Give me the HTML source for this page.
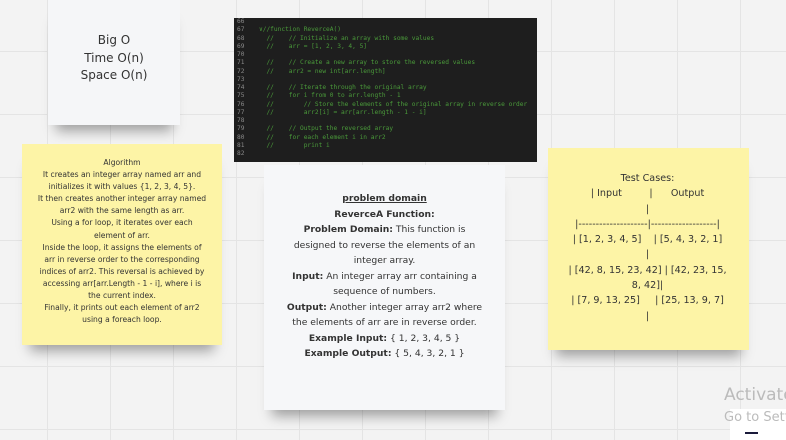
<!DOCTYPE html>
<html><head><meta charset="utf-8"><style>
html,body{margin:0;padding:0}
body{width:786px;height:440px;overflow:hidden;position:relative;background-color:#f3f3f3;
background-image:linear-gradient(#e4e4e4 1px,transparent 1px),linear-gradient(90deg,#e4e4e4 1px,transparent 1px);
background-size:63px 63px;background-position:47px 51px;font-family:"DejaVu Sans","Liberation Sans",sans-serif;color:#333}
.card{position:absolute;box-sizing:border-box;text-align:center}
.sh{box-shadow:0 14px 12px -8px rgba(0,0,0,.35)}
#bigo{left:48px;top:0;width:132px;height:125px;background:#f5f6f8;font-size:12px;line-height:17.5px;padding-top:32px;color:#333}
#code{position:absolute;left:234px;top:18px;width:303px;height:144px;background:#1e1e1e;font-family:"DejaVu Sans Mono","Liberation Mono",monospace;font-size:6.2px;line-height:8.27px;color:#4a9a3a;white-space:pre;overflow:hidden}
#code .n{display:inline-block;width:22px;color:#8a8a8a;padding-left:3px}
#alg{left:22px;top:144px;width:200px;height:201px;background:#fdf4a6;font-size:7.6px;line-height:12.1px;padding:13px 15px 0}
#mid{left:264px;top:165px;width:241px;height:245px;background:#f6f7f9;font-size:9.2px;line-height:15.5px;padding:26px 20px 0;color:#333}
#test{left:548px;top:148px;width:201px;height:202px;background:#fdf4a6;font-size:9.6px;line-height:15.3px;padding:23px 20px 0 18px;color:#333}
#act{position:absolute;left:724px;top:385px;font-size:17px;color:#bbb;white-space:nowrap}
#go{position:absolute;left:724px;top:410px;font-size:13px;color:#bbb;white-space:nowrap}
#wb{position:absolute;left:730px;top:409px;width:56px;height:31px;background:#fff}
#ul{position:absolute;left:745px;top:432px;width:13px;height:2px;background:#1a1a3a}
</style></head><body>
<div class="card sh" id="bigo">Big O<br>Time O(n)<br>Space O(n)</div>
<div id="code"><span class="n">66</span>
<span class="n">67</span>∨//function ReverceA()
<span class="n">68</span>  //    // Initialize an array with some values
<span class="n">69</span>  //    arr = [1, 2, 3, 4, 5]
<span class="n">70</span>
<span class="n">71</span>  //    // Create a new array to store the reversed values
<span class="n">72</span>  //    arr2 = new int[arr.length]
<span class="n">73</span>
<span class="n">74</span>  //    // Iterate through the original array
<span class="n">75</span>  //    for i from 0 to arr.length - 1
<span class="n">76</span>  //        // Store the elements of the original array in reverse order
<span class="n">77</span>  //        arr2[i] = arr[arr.length - 1 - i]
<span class="n">78</span>
<span class="n">79</span>  //    // Output the reversed array
<span class="n">80</span>  //    for each element i in arr2
<span class="n">81</span>  //        print i
<span class="n">82</span></div>
<div class="card sh" id="alg">Algorithm<br>It creates an integer array named arr and initializes it with values {1, 2, 3, 4, 5}.<br>It then creates another integer array named arr2 with the same length as arr.<br>Using a for loop, it iterates over each element of arr.<br>Inside the loop, it assigns the elements of arr in reverse order to the corresponding indices of arr2. This reversal is achieved by accessing arr[arr.Length - 1 - i], where i is the current index.<br>Finally, it prints out each element of arr2 using a foreach loop.</div>
<div class="card sh" id="mid"><b><u>problem domain</u></b><br><b>ReverceA Function:</b><br><b>Problem Domain:</b> This function is designed to reverse the elements of an integer array.<br><b>Input:</b> An integer array arr containing a sequence of numbers.<br><b>Output:</b> Another integer array arr2 where the elements of arr are in reverse order.<br><b>Example Input:</b> { 1, 2, 3, 4, 5 }<br><b>Example Output:</b> { 5, 4, 3, 2, 1 }</div>
<div class="card sh" id="test">Test Cases:<br>| Input&nbsp;&nbsp;&nbsp;&nbsp;&nbsp;&nbsp;&nbsp;&nbsp;&nbsp;|&nbsp;&nbsp;&nbsp;&nbsp;&nbsp;&nbsp;Output<br>|<br>|--------------------|-------------------|<br>| [1, 2, 3, 4, 5]&nbsp;&nbsp;&nbsp;&nbsp;| [5, 4, 3, 2, 1]<br>|<br>| [42, 8, 15, 23, 42] | [42, 23, 15, 8, 42]|<br>| [7, 9, 13, 25]&nbsp;&nbsp;&nbsp;&nbsp;&nbsp;| [25, 13, 9, 7]<br>|</div>
<div id="wb"></div>
<div id="act">Activate</div>
<div id="go">Go to Settings</div>
<div id="ul"></div>
</body></html>
